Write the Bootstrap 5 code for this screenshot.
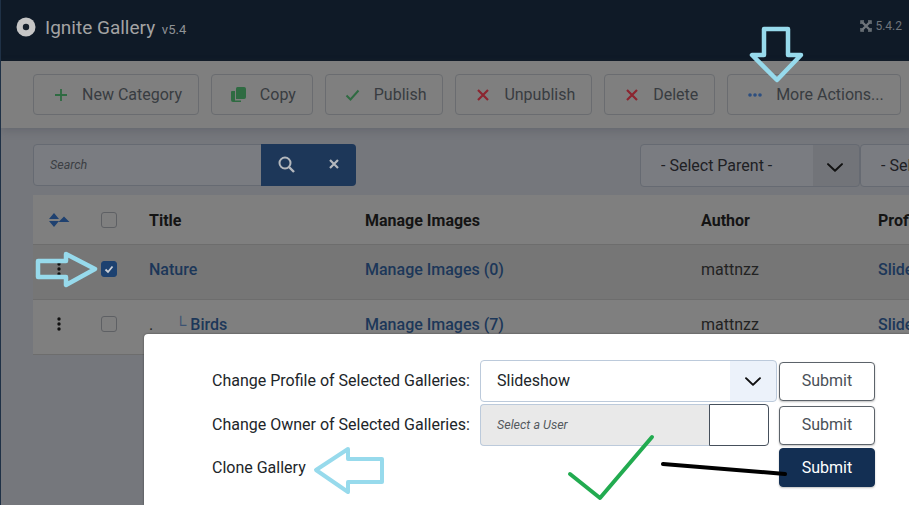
<!DOCTYPE html>
<html lang="en">
<head>
    <meta charset="UTF-8">
    <title>Ignite Gallery</title>
    <link href="https://cdn.jsdelivr.net/npm/bootstrap@5.3.0/dist/css/bootstrap.min.css" rel="stylesheet">
    <style>
        html, body { height: 100%; overflow: hidden; }
        body { font-family: Roboto, "Liberation Sans", sans-serif; font-size: 16px; background: #75777c; color: #1c1c1c; border-left: 1px solid #1f3146; position: relative; }

        .top-bar { height: 61px; background: #0f1a27; padding: 0 7px 7px 16px; margin-left: -1px; }
        .top-title { color: #a3a3a3; font-size: 19px; margin-left: 9px; line-height: 1; }
        .top-title small { font-size: 13px; color: #8f9296; margin-left: 2px; }
        .top-version { color: #6f757b; font-size: 12px; margin-top: -3px; gap: 3px; }

        .tool-bar { height: 67px; background: #7f7f7f; padding: 13px 0 0 32px; gap: 12px; box-shadow: 0 3px 8px rgba(60,65,75,.25); }
        .tool-btn { height: 41px; display: flex; align-items: center; background: transparent; border: 1px solid #6a6c70; border-radius: 4px; color: #383c41; font-size: 16px; padding: 0 15.9px 0 0; white-space: nowrap; flex: none; }
        .tool-btn:hover { background: transparent; color: #383c41; border-color: #6a6c70; }
        .tool-icon { width: 48px; padding-left: 5px; display: flex; justify-content: center; flex: none; }

        .filter-bar { padding: 16px 0 0 32px; height: 67px; }
        .search-box { width: 323px; height: 42px; flex: none; }
        .search-box .form-control { background: #7a7c81; border-color: #666a72; color: #3a3d42; font-size: 12.5px; font-style: italic; border-radius: 4px 0 0 4px; padding: 0 0 0 16px; box-shadow: none; }
        .search-box .form-control::placeholder { color: #3c3f44; opacity: 1; }
        .search-btn { background: #1d3759; width: 95px; border-radius: 0 4px 4px 0; padding: 0 0 2px 17px; gap: 34px; border: 0; }
        .filter-select { height: 43px; background-color: #7a7c81; border: 1px solid #666a72; color: #1e2024; font-size: 16px; border-radius: 4px; padding: 0 0 0 20px; flex: none; box-shadow: none;
            background-image: url("data:image/svg+xml,%3Csvg xmlns='http://www.w3.org/2000/svg' width='46' height='43'%3E%3Crect width='46' height='43' fill='%23727479'/%3E%3Cpath d='M15 20l7 7 7-7' fill='none' stroke='%23111' stroke-width='2' stroke-linecap='round' stroke-linejoin='round'/%3E%3C/svg%3E");
            background-size: 46px 100%; background-position: right center; background-repeat: no-repeat; }
        .select-parent { width: 220px; margin-left: 284px; }
        .select-other { width: 220px; }

        .grid-wrap { margin-left: 32px; width: 1000px; }
        .gallery-table { table-layout: fixed; width: 1000px; margin: 0; --bs-table-bg: #7f7f7f; --bs-table-color: #222; --bs-table-border-color: #6d6d6d; }
        .gallery-table th { height: 49px; font-weight: 700; color: #141414; vertical-align: middle; padding: 4px 0 0; }
        .gallery-table td { height: 55px; vertical-align: middle; padding: 0 0 4px; }
        .gallery-table tr.row-picked td { --bs-table-bg: #767676; background: #767676; }
        .gallery-table a { color: #1c3759; text-decoration: none; }
        .gallery-table td a { font-weight: 500; }
        .gallery-table td.move-cell { padding: 0 0 6px 24px; }
        .gallery-table td.check-cell { padding-bottom: 6px; }
        .gallery-table th.sort-cell { padding: 1px 0 0 16px; }
        .gallery-table th.check-cell { padding-top: 1px; }
        .gallery-table svg { display: block; }
        .mini-check { display: block; width: 16px; height: 16px; border: 1px solid #5e6064; border-radius: 3px; }
        .mini-check.on { background: #1c4170; border-color: #1c4170; }
        .tree-dot { display: inline-block; width: 26px; }
        .tree-mark { color: #3b5272; margin-right: 4px; font-size: 16px; font-weight: 300; }

        .modal-sheet { position: absolute; left: 143px; top: 334px; right: 0; bottom: 0; background: #fff; border-radius: 4px 0 0 0; padding: 26px 0 0 68px; box-shadow: 0 0 2px rgba(0,0,0,.5); color: #212529; }
        .sheet-row { margin-bottom: 2px; }
        .sheet-label { width: 268px; flex: none; }
        .profile-select { width: 297px; height: 42px; flex: none; border: 1px solid #bccadb; border-radius: 4px; padding: 0 0 0 16px; font-size: 16px; color: #212529; box-shadow: none;
            background-image: url("data:image/svg+xml,%3Csvg xmlns='http://www.w3.org/2000/svg' width='46' height='42'%3E%3Crect width='46' height='42' fill='%23ecf2fa'/%3E%3Cpath d='M16 18l7 7 7-7' fill='none' stroke='%23111' stroke-width='2' stroke-linecap='round' stroke-linejoin='round'/%3E%3C/svg%3E");
            background-size: 46px 100%; background-position: right center; background-repeat: no-repeat; }
        .user-box { width: 289px; height: 42px; flex: none; }
        .user-name { width: 229px; background: #e9e9e9; border: 1px solid #bccadb; border-right: 0; border-radius: 4px 0 0 4px; font-size: 12.5px; font-style: italic; color: #55595e; padding: 0 16px; }
        .user-pick { width: 60px; background: #fff; border: 1px solid #46505c; border-radius: 0 4px 4px 0; padding: 0; }
        .submit-btn { width: 96px; height: 39px; margin-left: 2px; border: 1px solid #5c636a; border-radius: 4px; background: #fff; color: #495057; font-size: 16px; padding: 0; box-shadow: 0 1px 2px rgba(0,0,0,.25); flex: none; }
        .submit-btn.solid { background: #132f53; border-color: #132f53; color: #fff; }
        .submit-btn.after-user { margin-left: 10px; }
        .clone-row .sheet-label { width: 565px; }

        .marks { position: absolute; left: -1px; top: 0; width: 909px; height: 505px; pointer-events: none; }
    </style>
</head>
<body>
    <nav class="top-bar d-flex align-items-center justify-content-between">
        <div class="d-flex align-items-center">
            <svg width="20" height="20" viewBox="0 0 20 20"><circle cx="10" cy="10" r="9.5" fill="#c6c6c6"/><circle cx="10" cy="10" r="3.2" fill="#16202c"/></svg>
            <span class="top-title">Ignite Gallery <small>v5.4</small></span>
        </div>
        <div class="top-version d-flex align-items-center">
            <svg width="12" height="12" viewBox="0 0 12 12" fill="none" stroke="#6f757b" stroke-width="2.4"><path d="M2 2l8 8M10 2l-8 8"/><path d="M1 4V1h3M8 1h3v3M11 8v3H8M4 11H1V8" stroke-width="1.5"/></svg>
            <span>5.4.2</span>
        </div>
    </nav>

    <div class="tool-bar d-flex">
        <button class="btn tool-btn"><span class="tool-icon"><svg width="14" height="14" viewBox="0 0 14 14"><path d="M7 1v12M1 7h12" stroke="#2f6b42" stroke-width="1.8"/></svg></span>New Category</button>
        <button class="btn tool-btn"><span class="tool-icon"><svg width="15" height="16" viewBox="0 0 15 16"><path d="M5 1.500A1.500 1.500 0 0 1 6.500 0H13a2 2 0 0 1 2 2v8a2 2 0 0 1-2 2H5z" fill="#2f6b42"/><path d="M1 4h3v9.500h6V15H2a2 2 0 0 1-2-2V5a1 1 0 0 1 1-1z" fill="#2f6b42"/></svg></span>Copy</button>
        <button class="btn tool-btn"><span class="tool-icon"><svg width="15" height="12" viewBox="0 0 15 12"><path d="M1.500 6.500l4 4 8-9" fill="none" stroke="#2f6b42" stroke-width="2"/></svg></span>Publish</button>
        <button class="btn tool-btn"><span class="tool-icon"><svg width="12" height="12" viewBox="0 0 12 12"><path d="M1 1l10 10M11 1L1 11" stroke="#8c2530" stroke-width="2.200"/></svg></span>Unpublish</button>
        <button class="btn tool-btn"><span class="tool-icon"><svg width="12" height="12" viewBox="0 0 12 12"><path d="M1 1l10 10M11 1L1 11" stroke="#8c2530" stroke-width="2.200"/></svg></span>Delete</button>
        <button class="btn tool-btn"><span class="tool-icon"><svg width="14" height="4" viewBox="0 0 14 4" fill="#2d4f80"><circle cx="2" cy="2" r="1.800"/><circle cx="7" cy="2" r="1.800"/><circle cx="12" cy="2" r="1.800"/></svg></span>More Actions...</button>
    </div>

    <div class="filter-bar d-flex align-items-start">
        <div class="search-box input-group flex-nowrap">
            <input class="form-control" type="text" placeholder="Search">
            <button class="btn search-btn d-flex align-items-center">
                <svg width="17" height="17" viewBox="0 0 17 17" fill="none" stroke="#b4b8bd" stroke-width="2"><circle cx="7" cy="7" r="5.500"/><path d="M11 11l5 5" stroke-width="2.400"/></svg>
                <svg width="10" height="10" viewBox="0 0 10 10"><path d="M1 1l8 8M9 1L1 9" stroke="#b4b8bd" stroke-width="2.200"/></svg>
            </button>
        </div>
        <select class="form-select filter-select select-parent"><option>- Select Parent -</option></select>
        <select class="form-select filter-select select-other"><option>- Select Profile -</option></select>
    </div>

    <div class="grid-wrap">
        <table class="table gallery-table">
            <colgroup><col style="width:68px"><col style="width:48px"><col style="width:216px"><col style="width:336px"><col style="width:177px"><col></colgroup>
            <thead>
                <tr>
                    <th class="sort-cell"><svg width="21" height="14" viewBox="0 0 21 14" fill="#1f4170"><path d="M5 0l5 6H0zM0 8h10l-5 6zM15 3.500L20.500 9h-11z"/></svg></th>
                    <th class="check-cell"><span class="mini-check"></span></th>
                    <th>Title</th>
                    <th>Manage Images</th>
                    <th>Author</th>
                    <th>Profile</th>
                </tr>
            </thead>
            <tbody>
                <tr class="row-picked">
                    <td class="move-cell"><svg width="4" height="14" viewBox="0 0 4 14" fill="#111"><circle cx="2" cy="2" r="1.700"/><circle cx="2" cy="7" r="1.700"/><circle cx="2" cy="12" r="1.700"/></svg></td>
                    <td class="check-cell"><span class="mini-check on"><svg width="14" height="14" viewBox="0 0 14 14"><path d="M3.500 7.500l2.500 2.500 4.500-5.500" fill="none" stroke="#c9ced6" stroke-width="1.800"/></svg></span></td>
                    <td><a href="#">Nature</a></td>
                    <td><a href="#">Manage Images (0)</a></td>
                    <td>mattnzz</td>
                    <td><a href="#">Slideshow</a></td>
                </tr>
                <tr>
                    <td class="move-cell"><svg width="4" height="14" viewBox="0 0 4 14" fill="#111"><circle cx="2" cy="2" r="1.700"/><circle cx="2" cy="7" r="1.700"/><circle cx="2" cy="12" r="1.700"/></svg></td>
                    <td class="check-cell"><span class="mini-check"></span></td>
                    <td><span class="tree-dot">.</span><span class="tree-mark">└</span><a href="#">Birds</a></td>
                    <td><a href="#">Manage Images (7)</a></td>
                    <td>mattnzz</td>
                    <td><a href="#">Slideshow</a></td>
                </tr>
            </tbody>
        </table>
    </div>

    <div class="modal-sheet">
        <div class="sheet-row d-flex align-items-center">
            <span class="sheet-label">Change Profile of Selected Galleries:</span>
            <select class="form-select profile-select"><option>Slideshow</option></select>
            <button class="btn submit-btn">Submit</button>
        </div>
        <div class="sheet-row d-flex align-items-center">
            <span class="sheet-label">Change Owner of Selected Galleries:</span>
            <div class="user-box d-flex">
                <div class="user-name d-flex align-items-center">Select a User</div>
                <button class="btn user-pick" aria-label="Select"></button>
            </div>
            <button class="btn submit-btn after-user">Submit</button>
        </div>
        <div class="clone-row d-flex align-items-center">
            <span class="sheet-label">Clone Gallery</span>
            <button class="btn submit-btn solid">Submit</button>
        </div>
    </div>

    <!-- hand drawn marks on top of the screenshot -->
    <svg class="marks" viewBox="0 0 909 505" fill="none" stroke-linejoin="round" stroke-linecap="round">
        <path d="M764 29H788V55H801L777 80L752 55H764Z" stroke="#97daec" stroke-width="4.500"/>
        <path d="M38 261H66V254L95 269L66 285V277H38Z" stroke="#97daec" stroke-width="4.500"/>
        <path d="M382 459H348V449L316 470L348 492V482H382Z" stroke="#97daec" stroke-width="4"/>
        <path d="M570 474L600 498L652 437" stroke="#22ab50" stroke-width="4"/>
        <path d="M663 464L785 474" stroke="#000" stroke-width="4"/>
    </svg>
</body>
</html>
